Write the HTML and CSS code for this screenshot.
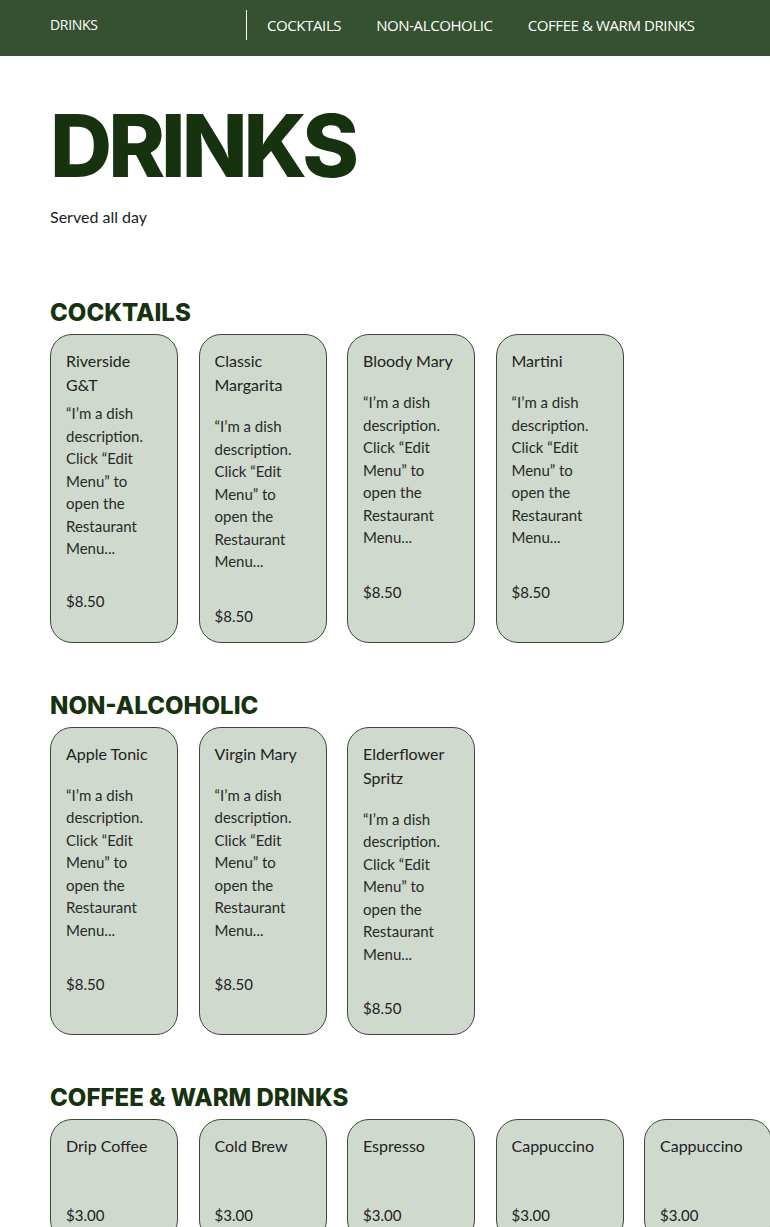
FILE: index.html
```html
<!DOCTYPE html>
<html lang="en">
<head>
<meta charset="utf-8">
<title>Drinks</title>
<link rel="stylesheet" href="styles.css">
</head>
<body>
<nav class="topnav">
  <div class="nav-title">DRINKS</div>
  <div class="nav-divider"></div>
  <ul class="nav-links">
    <li>COCKTAILS</li>
    <li>NON-ALCOHOLIC</li>
    <li>COFFEE &amp; WARM DRINKS</li>
  </ul>
</nav>
<main class="menu">
  <header class="menu-head">
    <h1 class="menu-title">DRINKS</h1>
    <p class="menu-sub">Served all day</p>
  </header>

  <section class="section">
    <h2 class="section-title">COCKTAILS</h2>
    <div class="cards">
      <div class="card">
        <div class="card-name">Riverside G&amp;T</div>
        <div class="card-desc card-desc--tight">“I’m a dish description. Click “Edit Menu” to open the Restaurant Menu...</div>
        <div class="card-price card-price--tight">$8.50</div>
      </div>
      <div class="card">
        <div class="card-name">Classic Margarita</div>
        <div class="card-desc">“I’m a dish description. Click “Edit Menu” to open the Restaurant Menu...</div>
        <div class="card-price">$8.50</div>
      </div>
      <div class="card">
        <div class="card-name">Bloody Mary</div>
        <div class="card-desc">“I’m a dish description. Click “Edit Menu” to open the Restaurant Menu...</div>
        <div class="card-price">$8.50</div>
      </div>
      <div class="card">
        <div class="card-name">Martini</div>
        <div class="card-desc">“I’m a dish description. Click “Edit Menu” to open the Restaurant Menu...</div>
        <div class="card-price">$8.50</div>
      </div>
    </div>
  </section>

  <section class="section">
    <h2 class="section-title">NON-ALCOHOLIC</h2>
    <div class="cards">
      <div class="card">
        <div class="card-name">Apple Tonic</div>
        <div class="card-desc">“I’m a dish description. Click “Edit Menu” to open the Restaurant Menu...</div>
        <div class="card-price">$8.50</div>
      </div>
      <div class="card">
        <div class="card-name">Virgin Mary</div>
        <div class="card-desc">“I’m a dish description. Click “Edit Menu” to open the Restaurant Menu...</div>
        <div class="card-price">$8.50</div>
      </div>
      <div class="card">
        <div class="card-name">Elderflower Spritz</div>
        <div class="card-desc">“I’m a dish description. Click “Edit Menu” to open the Restaurant Menu...</div>
        <div class="card-price">$8.50</div>
      </div>
    </div>
  </section>

  <section class="section">
    <h2 class="section-title">COFFEE &amp; WARM DRINKS</h2>
    <div class="cards">
      <div class="card">
        <div class="card-name">Drip Coffee</div>
        <div class="card-price card-price--nodesc">$3.00</div>
      </div>
      <div class="card">
        <div class="card-name">Cold Brew</div>
        <div class="card-price card-price--nodesc">$3.00</div>
      </div>
      <div class="card">
        <div class="card-name">Espresso</div>
        <div class="card-price card-price--nodesc">$3.00</div>
      </div>
      <div class="card">
        <div class="card-name">Cappuccino</div>
        <div class="card-price card-price--nodesc">$3.00</div>
      </div>
      <div class="card">
        <div class="card-name">Cappuccino</div>
        <div class="card-price card-price--nodesc">$3.00</div>
      </div>
    </div>
  </section>
</main>
</body>
</html>
```

FILE: styles.css
```css
* { box-sizing: border-box; }
html, body { margin: 0; padding: 0; background: #ffffff; }
body {
  font-family: "Lato", "Open Sans", sans-serif;
  color: #222;
  overflow: hidden;
}

.topnav {
  height: 56px;
  background: #35512f;
  display: flex;
  align-items: flex-start;
  padding: 10px 0 0 50px;
  font-family: "Open Sans", sans-serif;
  color: #ffffff;
}
.nav-title {
  width: 196px;
  font-size: 14px;
  line-height: 30px;
  letter-spacing: -0.3px;
}
.nav-divider {
  width: 1px;
  height: 30px;
  background: #ffffff;
}
.nav-links {
  list-style: none;
  margin: 0;
  padding: 0 0 0 20px;
  display: flex;
  gap: 35px;
  font-size: 15px;
  line-height: 30px;
  letter-spacing: -0.4px;
}

.menu {
  padding: 0 0 0 50px;
}
.menu-head {
  padding-top: 40px;
}
.menu-title {
  margin: 0;
  font-family: "Inter", sans-serif;
  font-weight: 800;
  font-size: 86px;
  line-height: 100px;
  letter-spacing: -4px;
  color: #17320f;
}
.menu-sub {
  margin: 10px 0 0;
  font-size: 16px;
  line-height: 22px;
  color: #222;
}

.section { margin-top: 70px; }
.section + .section { margin-top: 48px; }
.section-title {
  margin: 0 0 6px;
  font-family: "Inter", sans-serif;
  font-weight: 800;
  font-size: 24px;
  line-height: 30px;
  color: #17320f;
}

.cards {
  display: grid;
  grid-template-columns: repeat(5, 128px);
  column-gap: 20.5px;
}
.card {
  background: #cfd9cd;
  border: 1px solid #3b4a37;
  border-radius: 22px;
  padding: 14px 15px 14px;
  display: flex;
  flex-direction: column;
}
.card-name {
  font-size: 16px;
  line-height: 24px;
  color: #222;
}
.card-desc {
  margin-top: 18px;
  font-size: 15px;
  line-height: 22.5px;
  color: #2a2a2a;
}
.card-desc--tight { margin-top: 5px; }
.card-price {
  margin-top: 31px;
  font-size: 15px;
  line-height: 24px;
  color: #222;
}
.card-price--tight { margin-top: 29px; }
.card-price--nodesc { margin-top: 45px; }
```
